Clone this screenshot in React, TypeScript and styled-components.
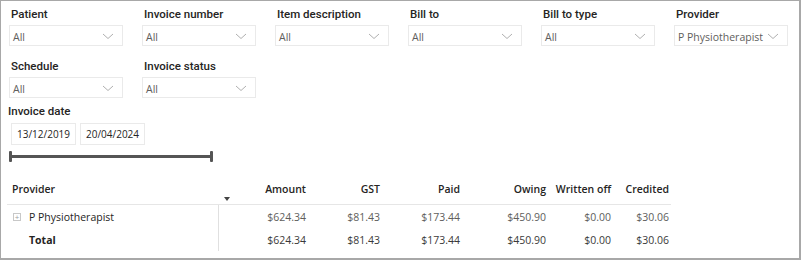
import styled, { createGlobalStyle } from "styled-components";

const GlobalStyle = createGlobalStyle`
  html, body {
    margin: 0;
    padding: 0;
    background: #ffffff;
  }
  body {
    font-family: "Open Sans", "Noto Sans", sans-serif;
  }
`;

type TFilter = { label: string; value: string };

const topFilters: TFilter[] = [
  { label: "Patient", value: "All" },
  { label: "Invoice number", value: "All" },
  { label: "Item description", value: "All" },
  { label: "Bill to", value: "All" },
  { label: "Bill to type", value: "All" },
  { label: "Provider", value: "P Physiotherapist" },
];

const secondFilters: TFilter[] = [
  { label: "Schedule", value: "All" },
  { label: "Invoice status", value: "All" },
];

const columns = ["Amount", "GST", "Paid", "Owing", "Written off", "Credited"];
const values = ["$624.34", "$81.43", "$173.44", "$450.90", "$0.00", "$30.06"];

function Chevron() {
  return (
    <svg width="12" height="7" viewBox="0 0 12 7">
      <path d="M1 1 L6 5.5 L11 1" fill="none" stroke="#b0b0b0" strokeWidth="1" />
    </svg>
  );
}

function Slicer({ label, value }: TFilter) {
  return (
    <SlicerBox>
      <SlicerLabel>{label}</SlicerLabel>
      <Dropdown>
        <span>{value}</span>
        <Chevron />
      </Dropdown>
    </SlicerBox>
  );
}

export default function App() {
  return (
    <>
      <GlobalStyle />
      <Frame>
        <FilterGrid>
          {topFilters.map((f) => (
            <Slicer key={f.label} {...f} />
          ))}
        </FilterGrid>
        <FilterGrid $second>
          {secondFilters.map((f) => (
            <Slicer key={f.label} {...f} />
          ))}
        </FilterGrid>

        <DateSection>
          <SlicerLabel>Invoice date</SlicerLabel>
          <DateRow>
            <DateBox>13/12/2019</DateBox>
            <DateBox>20/04/2024</DateBox>
          </DateRow>
          <Slider />
        </DateSection>

        <Table>
          <HeadCell $first>Provider</HeadCell>
          {columns.map((c, i) => (
            <HeadCell key={c}>
              {i === 0 ? <SortArrow /> : <span />}
              {c}
            </HeadCell>
          ))}

          <NameCell>
            <Expand>+</Expand>
            P Physiotherapist
          </NameCell>
          {values.map((v, i) => (
            <ValueCell key={"r" + i}>{v}</ValueCell>
          ))}

          <NameCell $total>Total</NameCell>
          {values.map((v, i) => (
            <ValueCell key={"t" + i} $total>
              {v}
            </ValueCell>
          ))}
        </Table>
      </Frame>
    </>
  );
}

const Frame = styled.div`
  box-sizing: border-box;
  width: 801px;
  height: 260px;
  border-top: 1px solid #a8a8a8;
  border-left: 1px solid #a8a8a8;
  border-right: 2px solid #a8a8a8;
  border-bottom: 2px solid #a8a8a8;
  padding: 5px 0 0 8px;
  overflow: hidden;
`;

const FilterGrid = styled.div<{ $second?: boolean }>`
  display: grid;
  grid-template-columns: repeat(6, 114px);
  column-gap: 19px;
  margin-top: ${(p) => (p.$second ? "12px" : "0")};
`;

const SlicerBox = styled.div`
  display: flex;
  flex-direction: column;
  gap: 3px;
`;

const SlicerLabel = styled.div`
  font-family: Roboto, "Noto Sans", sans-serif;
  font-weight: 500;
  font-size: 11.5px;
  color: #252423;
  padding-left: 2px;
  height: 16px;
  line-height: 16px;
`;

const Dropdown = styled.div`
  box-sizing: border-box;
  height: 21px;
  border: 1px solid #eaeaea;
  display: flex;
  align-items: center;
  justify-content: space-between;
  padding: 2px 8px 0 3px;
  font-size: 10.5px;
  color: #605e5c;
`;

const DateSection = styled.div`
  margin-top: 5px;
  display: flex;
  flex-direction: column;
  margin-left: -3px;
`;

const DateRow = styled.div`
  display: flex;
  gap: 4px;
  margin: 4px 0 0 5px;
`;

const DateBox = styled.div`
  box-sizing: border-box;
  width: 65px;
  height: 22px;
  border: 1px solid #eaeaea;
  display: flex;
  align-items: center;
  justify-content: center;
  font-size: 10px;
  color: #252423;
`;

const Slider = styled.div`
  position: relative;
  width: 202px;
  height: 3px;
  background: #555555;
  margin: 10px 0 0 4px;

  &::before,
  &::after {
    content: "";
    position: absolute;
    top: -4px;
    width: 3px;
    height: 11px;
    border-radius: 1px;
    background: #555555;
  }
  &::before {
    left: -1px;
  }
  &::after {
    right: -1px;
  }
`;

const Table = styled.div`
  display: grid;
  grid-template-columns: 212px 89px 74px 80px 86px 65px 58px;
  width: 664px;
  margin: 22px 0 0 -2px;
  font-size: 10.5px;
`;

const HeadCell = styled.div<{ $first?: boolean }>`
  display: flex;
  align-items: flex-start;
  justify-content: ${(p) => (p.$first ? "flex-start" : "space-between")};
  height: 25px;
  box-sizing: border-box;
  padding: 1px ${(p) => (p.$first ? "0" : "2px")} 0 ${(p) => (p.$first ? "5px" : "0")};
  border-bottom: 1px solid #e6e6e6;
  font-weight: 600;
  color: #252423;
  line-height: 16px;
`;

const SortArrow = styled.span`
  width: 0;
  height: 0;
  margin: 16px 0 0 5px;
  border-left: 3.5px solid transparent;
  border-right: 3.5px solid transparent;
  border-top: 4px solid #444;
`;

const NameCell = styled.div<{ $total?: boolean }>`
  display: flex;
  align-items: center;
  height: 23px;
  box-sizing: border-box;
  border-right: 1px solid #e0e0e0;
  padding-left: ${(p) => (p.$total ? "22px" : "6px")};
  font-weight: ${(p) => (p.$total ? 700 : 400)};
  color: #252423;
`;

const Expand = styled.span`
  box-sizing: border-box;
  width: 8px;
  height: 8px;
  border: 1px solid #c8c8c8;
  color: #a0a0a0;
  font-size: 8px;
  line-height: 5px;
  text-align: center;
  margin-right: 8px;
`;

const ValueCell = styled.div<{ $total?: boolean }>`
  display: flex;
  align-items: center;
  justify-content: flex-end;
  height: 23px;
  padding-right: 2px;
  color: ${(p) => (p.$total ? "#3b3a39" : "#605e5c")};
`;
